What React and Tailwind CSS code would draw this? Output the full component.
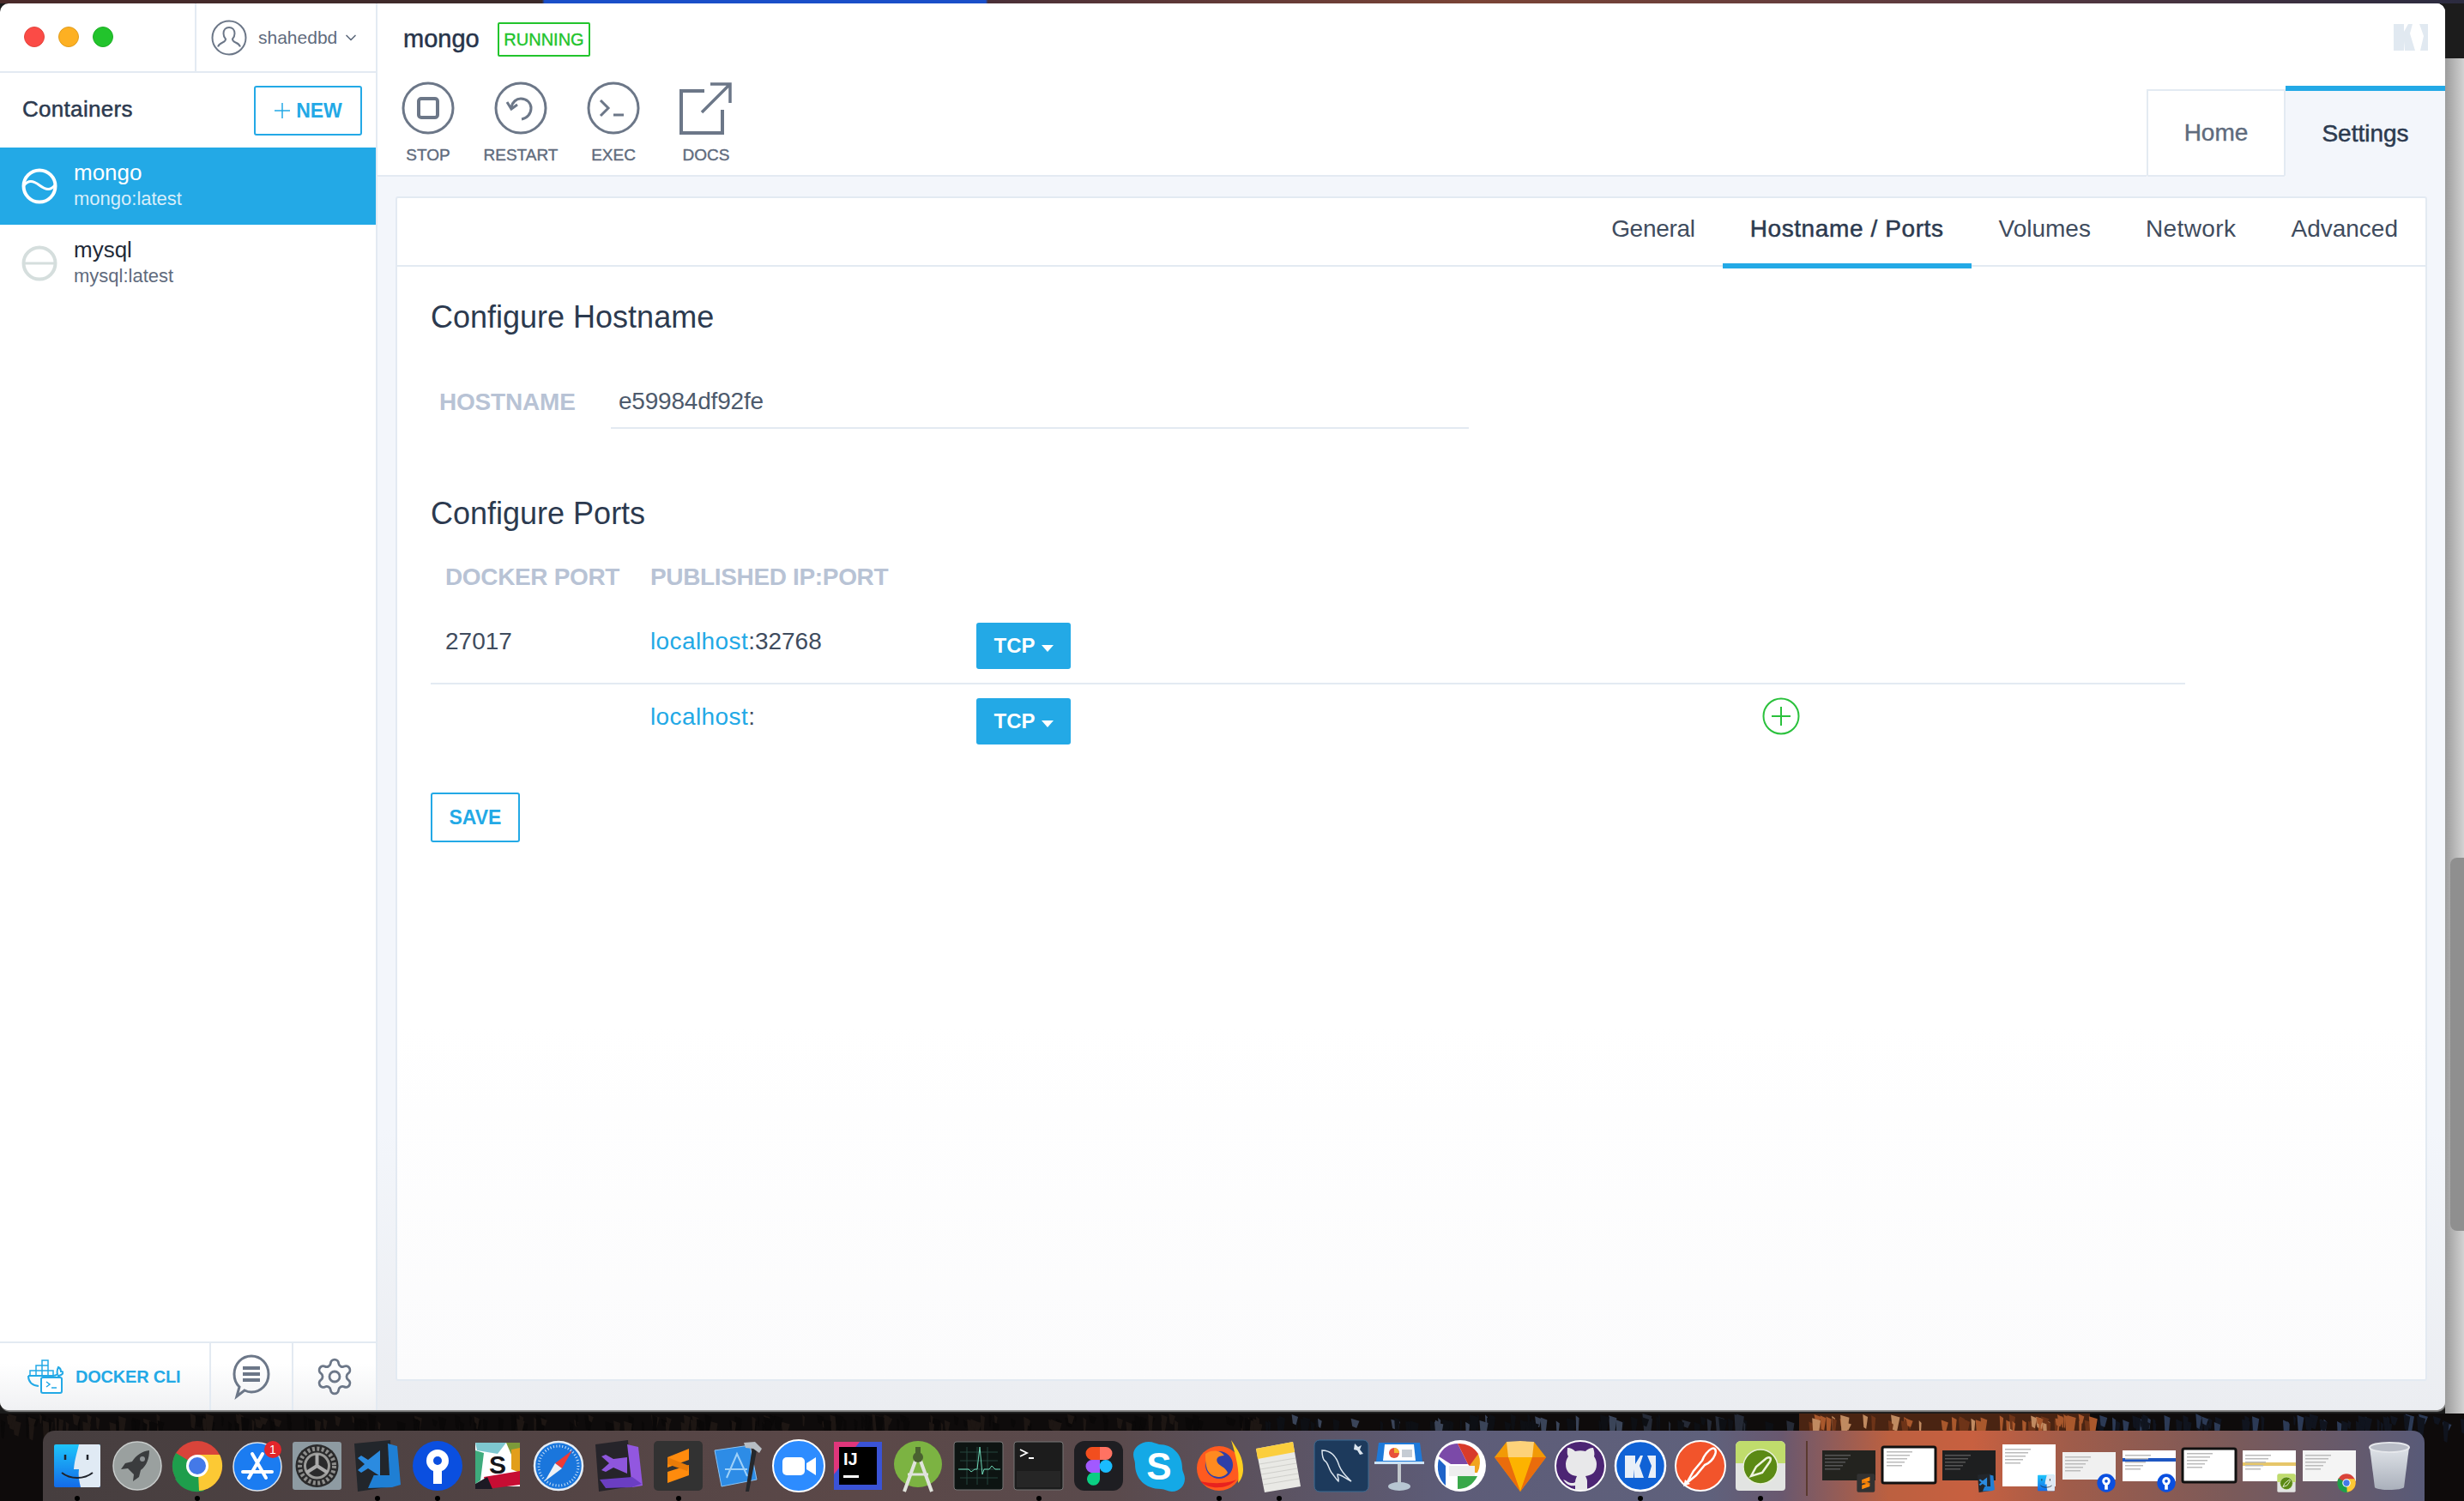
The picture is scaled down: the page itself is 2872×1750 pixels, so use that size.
import React from 'react';
import { ChevronDown, Settings as Gear } from 'lucide-react';

const stroked = '[-webkit-text-stroke:0.5px]';

const Avatar = () => (
  <svg width="42" height="42" viewBox="0 0 42 42" fill="none" stroke="#6c7788" strokeWidth="2">
    <circle cx="21" cy="21" r="19.5" />
    <path d="M21 9c-4 0-6.5 3-6.5 7 0 3 1 5 2.5 6.500 0 2-1 3-3.500 4-2.500 1-4.500 2-5.500 5M21 9c4 0 6.500 3 6.500 7 0 3-1 5-2.500 6.500 0 2 1 3 3.500 4 2.500 1 4.500 2 5.500 5" />
  </svg>
);

const ContainerIcon = ({ color, wave }) => (
  <svg width="42" height="42" viewBox="0 0 42 42" fill="none" stroke={color} strokeWidth="4">
    <circle cx="21" cy="21" r="18.500" />
    {wave ? <path d="M3 20c5-6 10-6 18 0s13 6 18 0" strokeWidth="3" /> : <path d="M3 21h36" strokeWidth="3" />}
  </svg>
);

const ToolIcon = ({ name }) => (
  <svg width="62" height="62" viewBox="0 0 62 62" fill="none" stroke="#6c7788" strokeWidth="3">
    {name !== 'docs' && <circle cx="31" cy="31" r="29" />}
    {name === 'stop' && <rect x="20" y="20" width="22" height="22" rx="3" strokeWidth="4" />}
    {name === 'restart' && (
      <>
        <path d="M20 30c1-6 6-10 11-10 7 0 12 5 12 11 0 7-5 12-11 13" />
        <path d="M15 24l5 8 7-5" />
      </>
    )}
    {name === 'exec' && <path d="M16 22l9 9-9 9M31 39h12" />}
    {name === 'docs' && (
      <>
        <path d="M29 11H2v49h48V33" strokeWidth="4" />
        <path d="M26 36L59 3M36 3h23v22" strokeWidth="3.500" />
      </>
    )}
  </svg>
);

const Whale = () => (
  <svg width="42" height="40" viewBox="0 0 42 40" fill="none" stroke="#23a9e6" strokeWidth="2">
    <path d="M10 7h7v6h-7zM17 1h7v6h-7zM17 7h7v6h-7zM3 13h7v6H3zM10 13h7v6h-7zM17 13h7v6h-7zM24 13h6v6h-6z" strokeWidth="1.500" />
    <path d="M1 19h29c2 0 4-1 5-2-1-3 0-6 1-8 2 1 3 3 3 5 1 0 2 0 3 1-1 2-4 4-7 4" />
    <path d="M1 19c0 6 3 11 12 12" />
    <rect x="16" y="21" width="24" height="18" rx="2" fill="#fff" />
    <path d="M22 26l4 3-4 3M28 33h6" strokeWidth="1.500" />
  </svg>
);

const Chat = () => (
  <svg width="44" height="54" viewBox="0 0 44 54" fill="none" stroke="#6c7788" strokeWidth="3">
    <path d="M5 50l3-11C4 35 2 30 2 24 2 12 11 3 22 3s20 9 20 21-9 21-20 21c-3 0-6-1-8-2z" />
    <path d="M12 17h20M12 24h20M12 31h20" strokeWidth="4" />
  </svg>
);

const Kite = () => (
  <svg width="40" height="31" viewBox="0 0 40 31" fill="#e1e9f1">
    <path d="M0 0h12v9l5-9h5l-3 11 6 20H13l-1-11v11H0zM30 0h10v31h-9l4-17z" />
  </svg>
);

const Plus = () => (
  <svg width="44" height="44" viewBox="0 0 44 44" fill="none" stroke="#2ac13c" strokeWidth="2">
    <circle cx="22" cy="22" r="20.500" />
    <path d="M22 11v22M11 22h22" />
  </svg>
);

// dock drawings, all on a 60x60 box
const DOCK = {
  finder: (
    <>
      <defs>
        <linearGradient id="fa" x1="0" y1="0" x2="0" y2="1"><stop offset="0" stopColor="#1ec5fb" /><stop offset="1" stopColor="#136be9" /></linearGradient>
      </defs>
      <rect x="3" y="5" width="54" height="50" rx="2" fill="url(#fa)" />
      <path d="M32 5h23a2 2 0 012 2v46a2 2 0 01-2 2H34c-2-8-3-14-2-21h-6c1-12 4-20 6-29z" fill="#e0eaf4" />
      <path d="M16 17v6M42 17v6" stroke="#20242c" strokeWidth="2.500" />
      <path d="M12 38c10 8 26 8 36 0" fill="none" stroke="#20242c" strokeWidth="2" />
    </>
  ),
  rocket: (
    <>
      <circle cx="30" cy="30" r="28" fill="#9aa09f" stroke="#c8cccb" strokeWidth="1.500" />
      <path d="M44 12c-8 1-15 5-20 13l-8 2-5 7 8-1 7 7-1 8 7-5 2-8c7-5 10-14 10-23z" fill="#3a3c3e" />
      <circle cx="36" cy="22" r="3" fill="#8d9294" />
    </>
  ),
  chrome: (
    <>
      <circle cx="30" cy="30" r="29" fill="#d9443a" />
      <path d="M30 30L5 15A29 29 0 0015 55z" fill="#1e9e4c" />
      <path d="M4 45L30 30l8 29A29 29 0 014 45z" fill="#1e9e4c" />
      <path d="M30 17h26a29 29 0 01-24 42z" fill="#fcc934" />
      <circle cx="30" cy="30" r="13" fill="#fff" />
      <circle cx="30" cy="30" r="10" fill="#4479e8" />
    </>
  ),
  appstore: (
    <>
      <circle cx="30" cy="31" r="28" fill="#1b7cf1" stroke="#dce4ee" strokeWidth="1.500" />
      <path d="M24 16l16 28M36 16L20 44M13 37h34" stroke="#fff" strokeWidth="4" strokeLinecap="round" />
      <circle cx="48" cy="11" r="10" fill="#e3262b" />
      <text x="48" y="16" fontSize="14" fill="#fff" textAnchor="middle" fontFamily="Liberation Sans">1</text>
    </>
  ),
  prefs: (
    <>
      <rect x="1" y="2" width="57" height="56" rx="3" fill="#8e9ba2" />
      <circle cx="29.500" cy="30" r="25" fill="#2a2a2b" />
      <circle cx="29.500" cy="30" r="20" fill="none" stroke="#8e8e8c" strokeWidth="5" strokeDasharray="3 2.500" />
      <circle cx="29.500" cy="30" r="14" fill="none" stroke="#9a9a98" strokeWidth="3" />
      <path d="M29.500 30V16M29.500 30L17 38M29.500 30L42 38" stroke="#aaa" strokeWidth="4" />
    </>
  ),
  vscode: (
    <>
      <path d="M3 4l42-4 2 54-40 6z" fill="#22262b" />
      <path d="M42 4l11 3 4 45-10 3-28 1z" fill="#1f7fd4" />
      <path d="M42 4l2 37H8z" fill="#22262b" />
      <path d="M33 12v30L19 33l-8 5-4-3 8-7-8-7 4-3 8 5z" fill="#2b8be0" />
    </>
  ),
  sourcetree: (
    <>
      <ellipse cx="30" cy="30" rx="29" ry="29" fill="#0a4fe0" />
      <circle cx="30" cy="24" r="13" fill="#fff" />
      <circle cx="30" cy="24" r="5" fill="#0a4fe0" />
      <rect x="25" y="30" width="10" height="21" fill="#fff" />
    </>
  ),
  slack: (
    <>
      <path d="M4 3h52v51H4z" fill="#fff" />
      <path d="M4 3h36L30 16 6 12z" fill="#7ec7cf" />
      <path d="M40 3h16v8l-10 6z" fill="#7c9a3a" />
      <path d="M46 11l10-2v29l-10-4z" fill="#e29e1b" />
      <path d="M4 12l10 3-4 32-6 4z" fill="#3eab7c" />
      <path d="M14 43l42-7v16l-38 5z" fill="#c70d33" />
      <path d="M4 51l14-8 6 14H4z" fill="#1c1a24" />
      <text x="30" y="39" fontSize="30" fontWeight="700" fill="#15151a" textAnchor="middle" fontFamily="Liberation Sans">S</text>
    </>
  ),
  safari: (
    <>
      <circle cx="30" cy="30" r="28" fill="#1a76dc" stroke="#e6edf4" strokeWidth="2.500" />
      <circle cx="30" cy="30" r="23" fill="none" stroke="#cfe4f8" strokeWidth="3" strokeDasharray="1 2.500" />
      <path d="M46 12L26 27l8 6z" fill="#ee3a36" />
      <path d="M14 48l12-21 8 6z" fill="#eef2f6" />
    </>
  ),
  vs: (
    <>
      <path d="M3 5l38-5 4 54-38 6z" fill="#26242a" />
      <path d="M40 5l13 3 5 45-12 2z" fill="#9257e0" />
      <path d="M40 20v19L24 32l-9 5-5-2 9-8-9-8 5-2 9 5z" fill="#8e56dc" />
      <path d="M8 46l38-3 11 8-12 4-30 1z" fill="#6b3ec2" />
    </>
  ),
  sublime: (
    <>
      <rect x="1" y="1" width="57" height="58" rx="5" fill="#323232" />
      <path d="M42 10v13L17 32V20zM17 37l25-8v12l-25 9z" fill="#ff8b0d" />
      <path d="M17 20l25 10-2 6-23-8z" fill="#e87b08" />
    </>
  ),
  xcode: (
    <>
      <path d="M2 12l41-6 8 40-41 8z" fill="#2d8ce6" stroke="#8bc4f5" />
      <path d="M16 44L28 16l12 26M14 34h26" fill="none" stroke="#9dd0f8" strokeWidth="2" />
      <path d="M46 8L38 60h4l9-48z" fill="#26282c" />
      <path d="M36 3l13-1 8 8-3 5-7-5-9-1z" fill="#b7bdc3" />
    </>
  ),
  zoom: (
    <>
      <ellipse cx="30" cy="30" rx="30" ry="30" fill="#2d8cff" stroke="#fff" strokeWidth="2" />
      <rect x="11" y="20" width="26" height="21" rx="5" fill="#fff" />
      <path d="M39 27l11-7v21l-11-7z" fill="#fff" />
    </>
  ),
  intellij: (
    <>
      <rect x="1" y="2" width="56" height="56" fill="#3a53d6" />
      <path d="M1 2h30L1 40z" fill="#e0367b" />
      <rect x="7" y="8" width="44" height="44" fill="#000" />
      <text x="12" y="29" fontSize="20" fontWeight="700" fill="#fff" fontFamily="Liberation Sans">IJ</text>
      <rect x="12" y="41" width="18" height="3" fill="#fff" />
    </>
  ),
  android: (
    <>
      <ellipse cx="29" cy="28" rx="28" ry="27" fill="#7cb342" />
      <path d="M29 16L13 60M29 16l16 44" stroke="#e0e3dc" strokeWidth="4" fill="none" />
      <path d="M17 40h24" stroke="#e0e3dc" strokeWidth="3" />
      <circle cx="29" cy="20" r="6" fill="#4a6130" />
      <rect x="26" y="8" width="6" height="8" fill="#4a6130" />
    </>
  ),
  activity: (
    <>
      <rect x="1" y="2" width="57" height="56" rx="3" fill="#0d1412" stroke="#777" />
      <path d="M8 14h44M8 24h44M8 34h44M8 44h44M16 8v44M28 8v44M40 8v44" stroke="#24453c" strokeWidth="1" />
      <path d="M6 34h12l3 3 4-3h3l3-26 3 32 2-6h6l3-4 4 4h6" fill="none" stroke="#6ed7b7" strokeWidth="1" />
    </>
  ),
  terminal: (
    <>
      <rect x="1" y="2" width="57" height="56" rx="3" fill="#1c1c1c" stroke="#777" />
      <rect x="4" y="36" width="51" height="19" fill="#262626" />
      <path d="M8 11l8 4-8 4" fill="none" stroke="#fff" strokeWidth="1.800" />
      <path d="M18 21h6" stroke="#fff" strokeWidth="1.800" />
    </>
  ),
  figma: (
    <>
      <rect x="1" y="1" width="57" height="58" rx="12" fill="#1e1e22" />
      <path d="M22 8h9v15h-9a7.500 7.500 0 010-15z" fill="#f24e1e" />
      <path d="M31 8h7a7.500 7.500 0 010 15h-7z" fill="#ff7262" />
      <path d="M22 23h9v15h-9a7.500 7.500 0 010-15z" fill="#a259ff" />
      <circle cx="38" cy="30.500" r="7.500" fill="#1abcfe" />
      <path d="M22 38h9v7.500a7.500 7.500 0 11-9-7.500z" fill="#0acf83" />
    </>
  ),
  skype: (
    <>
      <path d="M18 2c5 0 8 2 12 3 16 0 27 12 27 27 0 5 3 8 3 13 0 8-6 15-15 15-5 0-8-3-13-3C14 57 2 45 2 28c0-4-2-7-2-11C0 9 8 2 18 2z" fill="#14a9e6" />
      <text x="30" y="46" fontSize="44" fontWeight="700" fill="#fff" textAnchor="middle" fontFamily="Liberation Sans">S</text>
    </>
  ),
  firefox: (
    <>
      <circle cx="30" cy="33" r="26" fill="#ff5a1f" />
      <path d="M44 0c8 12 14 20 14 34 0 6-2 12-6 16 2-14-2-30-8-50z" fill="#ffcf1f" />
      <circle cx="30" cy="29" r="16" fill="#2f3fa8" />
      <path d="M14 16c8-6 18-4 22 2-8 0-10 4-8 8s10 6 12 12c-6 8-20 6-24-4-2-6-2-12-2-18z" fill="#ff8a1f" />
      <path d="M8 48c10 10 32 10 42-2-8 4-24 6-42 2z" fill="#e8221f" />
    </>
  ),
  notes: (
    <>
      <path d="M3 10l43-8 9 52-42 7z" fill="#e9e9e5" />
      <path d="M3 10l43-8 2 12-43 8z" fill="#fbce3d" />
      <path d="M7 28l42-7M8 34l42-7M9 40l42-7M10 46l42-7M11 52l42-7" stroke="#cfcfcb" strokeWidth="1" />
    </>
  ),
  mysql: (
    <>
      <rect x="1" y="0" width="63" height="60" rx="6" fill="#1d3a5c" stroke="#3a6a92" />
      <path d="M10 12c8 0 16 5 20 18 3 8 8 12 14 18-8-4-12-8-16-8 0 3 2 6 1 8-4-4-6-8-8-10-4-6-4-12-8-14-2-2-3-8-3-12z" fill="none" stroke="#dbe5ee" strokeWidth="1.500" />
      <path d="M48 4l4 4 4-2-2 5 4 5-4 1-3-5-4-1z" fill="#dbe5ee" />
    </>
  ),
  keynote: (
    <>
      <rect x="28" y="26" width="4" height="26" fill="#c2c8cc" />
      <ellipse cx="30" cy="54" rx="13" ry="5" fill="#b7c6d2" />
      <path d="M6 3h48l3 22H3z" fill="#1d79d9" />
      <path d="M13 5h34l2 19H11z" fill="#fff" />
      <circle cx="24" cy="15" r="6" fill="#e8503a" />
      <path d="M24 15V9a6 6 0 016 6z" fill="#f2b632" />
      <rect x="33" y="11" width="12" height="9" fill="#c5ccd4" />
      <rect x="1" y="25" width="58" height="3" fill="#cde2f4" />
    </>
  ),
  picasa: (
    <>
      <ellipse cx="31" cy="30" rx="30" ry="30" fill="#fff" />
      <path d="M6 19C10 9 19 4 28 4l12 24H20z" fill="#7b4aa8" />
      <path d="M28 4a26 26 0 0124 12l-3 22-9-10z" fill="#d83b2b" />
      <path d="M52 16a27 27 0 01-1 22H36z" fill="#f1a41f" />
      <path d="M14 53V30l-8-8c-3 12 0 24 8 31z" fill="#1f64c9" />
      <path d="M28 57c10 0 18-5 23-15H28z" fill="#39a84a" />
      <rect x="18" y="30" width="30" height="12" fill="#eee" />
    </>
  ),
  sketch: (
    <>
      <path d="M30 60L0 20 14 2h32l14 18z" fill="#f29a06" />
      <path d="M30 60L16 20h28z" fill="#fdb300" />
      <path d="M14 2l2 18h28l2-18-16-1z" fill="#fdd27a" />
      <path d="M0 20h16L30 60zM60 20H44L30 60z" fill="#ea6c0c" />
    </>
  ),
  github: (
    <>
      <circle cx="30" cy="30" r="29" fill="#4c2574" stroke="#fff" strokeWidth="2" />
      <path d="M15 9c4 0 7 2 9 4 4-1 8-1 12 0 2-2 5-4 9-4 1 3 2 7 1 10 2 3 3 6 3 9 0 10-6 13-13 14 1 2 2 4 2 6v10H24v-5c-6 1-10-1-14-7 4 1 6 4 9 4 2 0 4 0 5-1 0-2 1-5 2-7-8-1-13-5-13-14 0-3 1-6 3-9-2-3-1-7-1-10z" fill="#e8e8ea" />
    </>
  ),
  kite: (
    <>
      <circle cx="30" cy="30" r="29" fill="#0f62d6" stroke="#fff" strokeWidth="2.500" />
      <path d="M12 18h12v10l6-10h3l-4 12 5 14H23l-1-10v10H12zM38 18h10v26h-9l4-14z" fill="#e8eff8" />
    </>
  ),
  postman: (
    <>
      <circle cx="30" cy="30" r="29" fill="#f2542b" stroke="#fff" strokeWidth="2" />
      <path d="M14 50l8-14 10-12c2-6 7-12 11-14s6 2 4 7-7 10-12 12l-10 12z" fill="none" stroke="#fff" strokeWidth="2.500" />
      <path d="M12 46l6 5-8 3z" fill="#fff" />
    </>
  ),
  coda: (
    <>
      <path d="M1 7a6 6 0 016-6h46a6 6 0 016 6v48a4 4 0 01-4 4H5a4 4 0 01-4-4z" fill="#e2e4e2" />
      <path d="M1 7a6 6 0 016-6h46a6 6 0 016 6v20H1z" fill="#c0dc6c" />
      <circle cx="30" cy="31" r="20" fill="#5b8a14" stroke="#e8f0d8" strokeWidth="1.500" />
      <path d="M19 42l6-11 12-10c4-2 6 0 4 4l-9 13z" fill="none" stroke="#eef4de" strokeWidth="2.500" />
    </>
  ),
};

const DOCK_ROW = [
  ['finder', true], ['rocket'], ['chrome', true], ['appstore'], ['prefs'], ['vscode', true], ['sourcetree', true],
  ['slack'], ['safari'], ['vs'], ['sublime', true], ['xcode'], ['zoom'], ['intellij'], ['android'], ['activity'],
  ['terminal', true], ['figma'], ['skype'], ['firefox', true], ['notes', true], ['mysql'], ['keynote'], ['picasa'],
  ['sketch'], ['github'], ['kite', true], ['postman'], ['coda', true],
];

// y and h are relative to the top of the dock
const THUMBS = [
  { y: 23, h: 35, bg: '#23231f', badge: 'sublime' },
  { y: 19, h: 42, bg: '#fff', frame: true },
  { y: 23, h: 35, bg: '#1e1f20', badge: 'vscode' },
  { y: 16, h: 49, bg: '#fff', badge: 'finder' },
  { y: 25, h: 32, bg: '#f0f0f0', badge: 'sourcetree' },
  { y: 23, h: 36, bg: '#fff', bar: true, badge: 'sourcetree' },
  { y: 21, h: 39, bg: '#fff', frame: true },
  { y: 23, h: 36, bg: '#fff', stripe: true, badge: 'coda' },
  { y: 23, h: 36, bg: '#f4f4f4', badge: 'chrome' },
];

const Thumb = ({ t }) => {
  const light = t.bg !== '#23231f' && t.bg !== '#1e1f20';
  return (
    <svg width="70" height="82" viewBox="0 0 70 82" className="shrink-0">
      <rect x="4" y={t.y} width="62" height={t.h} fill={t.bg} stroke={t.frame ? '#111' : 'none'} strokeWidth={t.frame ? 3 : 0} rx={t.frame ? 2 : 0} />
      {t.bar && <rect x="4" y={t.y + 9} width="62" height="4" fill="#1f57c3" />}
      {t.stripe && <rect x="4" y={t.y + 14} width="62" height="4" fill="#e6c66a" />}
      {[0, 1, 2, 3, 4].map((i) => (
        <rect key={i} x={t.frame ? 9 : 7} y={t.y + 5 + i * 4} width={30 - i * 3} height="1.500" fill={light ? '#bbb' : '#555'} />
      ))}
      {t.badge && (
        <svg x="44" y="50" width="22" height="22" viewBox="0 0 60 60">{DOCK[t.badge]}</svg>
      )}
    </svg>
  );
};

const Trash = () => (
  <svg width="50" height="58" viewBox="0 0 50 62" preserveAspectRatio="none">
    <defs>
      <linearGradient id="tr" x1="0" y1="0" x2="0" y2="1"><stop offset="0" stopColor="#dfe3e8" /><stop offset="1" stopColor="#aab0bb" /></linearGradient>
    </defs>
    <path d="M2 8l6 50c5 4 29 4 34 0l6-50z" fill="url(#tr)" />
    <ellipse cx="25" cy="8" rx="23" ry="6" fill="#b8bcc6" stroke="#e6e8ec" strokeWidth="2" />
  </svg>
);

// dark rock behind the dock: vertical streaks, warm in the middle of the right half
const Wallpaper = () => {
  const streaks = [];
  let s = 11;
  const next = () => {
    s = (s * 9301 + 49297) % 233280;
    return s / 233280;
  };
  for (let i = 0; i < 420; i++) {
    const x = next() * 2872;
    const y = next() * 10;
    const w = 2 + next() * 9;
    const h = 6 + next() * 20;
    const k = next();
    let fill = k > 0.5 ? '#1d1613' : '#0a0808';
    if (x > 2097 && x < 2436) fill = k > 0.6 ? '#a9582c' : k > 0.25 ? '#6e3418' : '#c08a60';
    else if (x > 1465 && x < 1905) fill = k > 0.75 ? '#3a4458' : '#0d0f14';
    else if (x >= 1905 && x <= 2097) fill = k > 0.4 ? '#252a36' : '#0d0f14';
    else if (x >= 2436) fill = k > 0.7 ? '#2c3a55' : '#10141e';
    streaks.push(<path key={i} d={`M${x} ${y}l${w} 3-${w / 3} ${h}-${w / 2} -2z`} fill={fill} />);
  }
  return (
    <svg className="absolute inset-0" width="2872" height="102" viewBox="0 0 2872 102">
      <rect x="2097" width="339" height="26" fill="#4a2412" />
      {streaks}
    </svg>
  );
};

const PortRow = ({ port, value, plus }) => (
  <div className="flex h-[54px] items-start pl-[17px]">
    <div className="w-[239px] h-[44px] leading-[44px] text-[28px] text-[#3f4c5e]">{port}</div>
    <div className="w-[380px] h-[44px] leading-[44px] text-[28px] text-[#3f4c5e]">
      <span className="text-[#23a9e6] tracking-[0.4px]">localhost</span>:{value}
    </div>
    <button className="w-[110px] h-[54px] flex items-center justify-center gap-[7px] rounded-[3px] bg-[#23a9e6] text-[24px] font-bold text-white">
      TCP
      <span className="mt-[5px] border-x-[7px] border-t-[8px] border-x-transparent border-t-white" />
    </button>
    {plus && <div className="ml-[806px] -mt-[1px]"><Plus /></div>}
  </div>
);

const SUB_TABS = [
  ['General', 'h-[80px] px-[32px] pb-[8px] flex items-center text-[28px] tracking-[-0.3px] text-[#3f4c5e]'],
  ['Hostname / Ports', 'h-[82px] px-[32px] pb-[4px] flex items-center border-b-[6px] border-[#23a9e6] text-[28px] tracking-[0.6px] text-[#2c3a4f] [-webkit-text-stroke:0.5px]'],
  ['Volumes', 'h-[80px] px-[32px] pb-[8px] flex items-center text-[28px] text-[#3f4c5e]'],
  ['Network', 'h-[80px] px-[32px] pb-[8px] flex items-center text-[28px] tracking-[0.4px] text-[#3f4c5e]'],
  ['Advanced', 'h-[80px] px-[32px] pb-[8px] flex items-center text-[28px] text-[#3f4c5e]'],
];

export default function App() {
  return (
    <div className="w-[2872px] h-[1750px] flex flex-col overflow-hidden bg-[#0e0b0b] font-['Liberation_Sans',Arial,sans-serif]">
      <div className="h-[4px] shrink-0 bg-[linear-gradient(90deg,#4a2a2a_0%,#3b2a2a_22%,#1a4fc8_22.1%,#1a4fc8_40%,#4a3038_40.1%,#7a4436_60%,#5a3a40_80%,#2b2b40_100%)]" />
      <div className="h-[1644px] shrink-0 flex bg-[#1a1a1a]">
        <div className="w-[2850px] h-[1640px] flex rounded-[10px] overflow-hidden bg-white shadow-[1px_2px_1px_#8a8a8a]">
          {/* sidebar */}
          <aside className="w-[440px] shrink-0 flex flex-col border-r-2 border-[#e3eaf2]">
            <div className="h-[81px] shrink-0 flex border-b-2 border-[#e3eaf2]">
              <div className="w-[229px] flex items-center gap-[16px] pl-[28px] pb-[1px] border-r-2 border-[#e3eaf2]">
                <span className="w-[24px] h-[24px] rounded-full bg-[#fb4b46] border border-[#e2443c]" />
                <span className="w-[24px] h-[24px] rounded-full bg-[#fdb022] border border-[#e09c1c]" />
                <span className="w-[24px] h-[24px] rounded-full bg-[#22c42c] border border-[#1eae26]" />
              </div>
              <div className="flex items-center pl-[17px]">
                <Avatar />
                <span className="ml-[13px] text-[21px] text-[#5f6b7d]">shahedbd</span>
                <ChevronDown className="ml-[6px] text-[#5f6b7d]" size={20} strokeWidth={2} />
              </div>
            </div>
            <div className="h-[87px] shrink-0 flex items-center justify-between pl-[26px] pr-[16px] pb-[3px]">
              <span className={`text-[26px] tracking-[0.3px] text-[#2c3a4f] ${stroked}`}>Containers</span>
              <button className="w-[126px] h-[58px] mt-[4px] flex items-center justify-center gap-[6px] rounded-[3px] border-2 border-[#23a9e6] text-[23px] font-bold text-[#23a9e6]">
                <svg width="20" height="20" viewBox="0 0 20 20" stroke="#23a9e6" strokeWidth="1.500"><path d="M10 1v18M1 10h18" /></svg>
                NEW
              </button>
            </div>
            <div className="h-[90px] shrink-0 flex items-center gap-[19px] pl-[25px] bg-[#23a9e6] text-white">
              <ContainerIcon color="#fff" wave />
              <div className="flex flex-col pb-[2px]">
                <span className="text-[26px] leading-[32px]">mongo</span>
                <span className="text-[22px] leading-[30px] text-[#d8eefa]">mongo:latest</span>
              </div>
            </div>
            <div className="h-[90px] shrink-0 flex items-center gap-[19px] pl-[25px]">
              <ContainerIcon color="#d5dedd" />
              <div className="flex flex-col pb-[2px]">
                <span className="text-[26px] leading-[32px] text-[#1f2a38]">mysql</span>
                <span className="text-[22px] leading-[30px] text-[#5f6b7d]">mysql:latest</span>
              </div>
            </div>
            <div className="flex-1" />
            <div className="h-[80px] shrink-0 flex border-t-2 border-[#e3eaf2] bg-[linear-gradient(180deg,#ffffff_30%,#f0f1f3_100%)]">
              <div className="w-[246px] flex items-center gap-[14px] pl-[32px] border-r-2 border-[#e3eaf2]">
                <Whale />
                <span className="text-[20px] font-bold tracking-[-0.2px] text-[#23a9e6]">DOCKER CLI</span>
              </div>
              <div className="w-[96px] flex items-center justify-center border-r-2 border-[#e3eaf2]">
                <Chat />
              </div>
              <div className="flex-1 flex items-center justify-center">
                <Gear size={48} strokeWidth={1.4} className="text-[#6c7788]" />
              </div>
            </div>
          </aside>

          {/* main */}
          <main className="flex-1 flex flex-col relative bg-[linear-gradient(180deg,#f3f6fb_80%,#ebedf1_100%)]">
            <div className="absolute top-[24px] right-[20px]"><Kite /></div>
            <header className="h-[202px] shrink-0 flex items-end bg-white">
              <div className="flex-1 h-full flex flex-col pl-[30px] pt-[22px] border-b-2 border-[#e3eaf2]">
                <div className="flex items-center h-[40px]">
                  <span className={`w-[90px] text-[29px] text-[#27344a] ${stroked}`}>mongo</span>
                  <span className="ml-[20px] h-[40px] w-[108px] flex items-center justify-center rounded-[2px] border-2 border-[#22c42c] text-[20px] text-[#22c42c] [-webkit-text-stroke:0.4px]">RUNNING</span>
                </div>
                <div className="flex mt-[29px] -ml-[25px]">
                  {[
                    ['stop', 'STOP'],
                    ['restart', 'RESTART'],
                    ['exec', 'EXEC'],
                    ['docs', 'DOCS'],
                  ].map(([name, label]) => (
                    <div key={name} className="w-[108px] flex flex-col items-center">
                      <ToolIcon name={name} />
                      <span className="mt-[13px] text-[19px] leading-[22px] text-[#5f6b7d] [-webkit-text-stroke:0.4px]">{label}</span>
                    </div>
                  ))}
                </div>
              </div>
              <div className="w-[162px] h-[102px] flex items-center justify-center border-2 border-[#e3eaf2] rounded-b-[2px] bg-white text-[28px] text-[#5f6b7d] [-webkit-text-stroke:0.4px]">Home</div>
              <div className="w-[186px] h-[106px] flex items-center justify-center border-t-[6px] border-[#23a9e6] bg-[#f3f6fb] text-[28px] text-[#2c3a4f] [-webkit-text-stroke:0.5px]">Settings</div>
            </header>

            <div className="flex-1 pt-[23px] pl-[21px] pr-[21px] pb-[34px] flex">
              <section className="flex-1 rounded-[3px] border-2 border-[#e3eaf2] bg-[linear-gradient(180deg,#ffffff_70%,#fbfbfc_100%)]">
                <nav className="h-[80px] flex justify-end border-b-2 border-[#e3eaf2]">
                  {SUB_TABS.map(([label, cls]) => (
                    <span key={label} className={cls}>{label}</span>
                  ))}
                </nav>
                <div className="pl-[39px] pt-[37px]">
                  <h2 className="h-[44px] leading-[44px] text-[36px] text-[#2c3a4f]">Configure Hostname</h2>
                  <div className="flex items-center mt-[42px] h-[66px] pt-[4px]">
                    <span className="w-[210px] pl-[10px] text-[28px] font-bold tracking-[-0.2px] text-[#b8c3d5]">HOSTNAME</span>
                    <div className="w-[1000px] h-[62px] flex items-center pl-[9px] border-b-2 border-[#e3eaf2] text-[28px] tracking-[-0.2px] text-[#4d5a6c]">e59984df92fe</div>
                  </div>
                  <h2 className="h-[44px] leading-[44px] text-[36px] text-[#2c3a4f] mt-[77px]">Configure Ports</h2>
                  <div className="flex items-center h-[44px] pl-[17px] mt-[30px] text-[28px] font-bold tracking-[-0.35px] text-[#b8c3d5]">
                    <span className="w-[239px]">DOCKER PORT</span>
                    <span>PUBLISHED IP:PORT</span>
                  </div>
                  <div className="w-[2045px] mt-[31px]">
                    <PortRow port="27017" value="32768" />
                    <div className="h-[2px] mt-[16px] mb-[16px] bg-[#e3eaf2]" />
                    <PortRow value="" plus />
                  </div>
                  <button className="w-[104px] h-[58px] mt-[56px] rounded-[3px] border-2 border-[#23a9e6] text-[23px] font-bold text-[#23a9e6]">SAVE</button>
                </div>
              </section>
            </div>
          </main>
        </div>

        {/* sliver of the window behind */}
        <div className="flex-1 flex flex-col">
          <div className="h-[64px] bg-[#1c1c1c]" />
          <div className="flex-1 pl-[6px] pt-[932px] bg-[linear-gradient(90deg,#9c9c9c,#d2d2d2)]">
            <div className="h-[435px] rounded-l-[8px] bg-[#8f8f8f]" />
          </div>
        </div>
      </div>

      {/* desktop + dock */}
      <div className="flex-1 relative">
        <Wallpaper />
        <div className="relative ml-[50px] mt-[20px] w-[2776px] h-[82px] flex rounded-t-[14px] overflow-hidden pl-[5px] bg-[linear-gradient(90deg,#463e3f_0%,#5b4848_34%,#5a4a4c_45%,#5d5c78_59%,#5f617c_70%,#69586f_73%,#bc6040_77.5%,#c86040_81%,#a05c4a_85%,#7a5a5a_92%,#585a78_100%)]">
          {DOCK_ROW.map(([name, on]) => (
            <div key={name} className="w-[70.07px] shrink-0 flex flex-col items-center pt-[11px]">
              <svg width="60" height="60" viewBox="0 0 60 60" className="overflow-visible">{DOCK[name]}</svg>
              {on && <span className="mt-[5px] w-[6px] h-[6px] rounded-full bg-black" />}
            </div>
          ))}
          <div className="w-[2px] h-[64px] mt-[12px] ml-[18px] mr-[13px] shrink-0 bg-[#5a3a30]" />
          <div className="flex shrink-0">
            {THUMBS.map((t, i) => <Thumb key={i} t={t} />)}
          </div>
          <div className="ml-[10px] pt-[12px] shrink-0"><Trash /></div>
        </div>
      </div>
    </div>
  );
}
